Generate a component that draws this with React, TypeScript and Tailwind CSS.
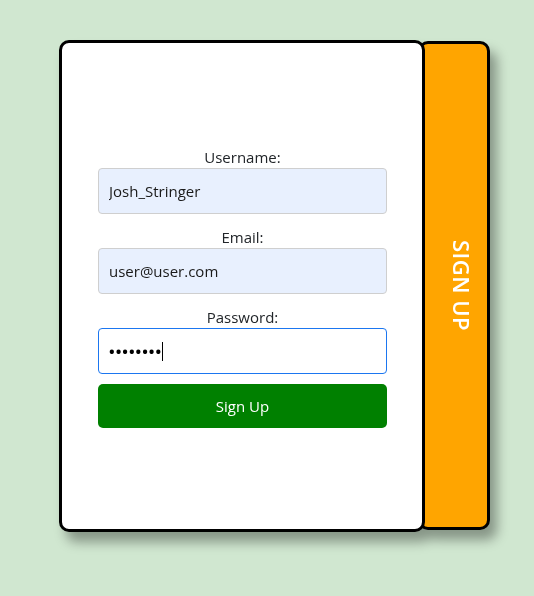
import React from "react";

const fields = [
  { id: "username", label: "Username:", type: "text", value: "Josh_Stringer" },
  { id: "email", label: "Email:", type: "email", value: "user@user.com" },
];

export default function App() {
  return (
    <div className="min-h-screen bg-[#d0e7d0] pt-[40px] pl-[59px] font-['Open_Sans',sans-serif] text-[#212529]">
      <div className="flex items-start w-fit drop-shadow-[7px_10px_6px_rgba(0,0,0,0.35)]">
        {/* Form card */}
        <div className="relative z-10 w-[366px] h-[492px] bg-white border-[3px] border-black rounded-[10px] flex flex-col justify-center pl-[36px] pr-[35px] pt-[2px]">
          <form className="flex flex-col" onSubmit={(e) => e.preventDefault()}>
            {fields.map((f) => (
              <div key={f.id} className="flex flex-col mb-[12px]">
                <label htmlFor={f.id} className="block text-center text-[15px] leading-[22px]">
                  {f.label}
                </label>
                <input
                  id={f.id}
                  type={f.type}
                  defaultValue={f.value}
                  className="h-[46px] w-full rounded-[4px] border border-[#cfcfcf] bg-[#e8f0fe] pl-[10px] text-[15px] text-[#1a1a1a] outline-none"
                />
              </div>
            ))}

            <div className="flex flex-col">
              <label htmlFor="password" className="block text-center text-[15px] leading-[22px]">
                Password:
              </label>
              <div className="h-[46px] w-full rounded-[4px] border border-[#1b76f0] bg-white pl-[10px] flex items-center">
                <span className="text-[15px] font-bold text-black tracking-[1px]">••••••••</span>
                <span className="w-px h-[19px] bg-black" />
              </div>
            </div>

            <button
              type="submit"
              className="mt-[10px] h-[44px] w-full rounded-[5px] bg-[#008000] text-white text-[15px]"
            >
              Sign Up
            </button>
          </form>
        </div>

        {/* Side tab */}
        <div className="-ml-[7px] mt-[1px] w-[72px] h-[489px] bg-[#ffa500] border-[3px] border-black rounded-[10px] flex items-center justify-center pl-[14px]">
          <span className="[writing-mode:vertical-rl] whitespace-nowrap text-white text-[22px] font-semibold tracking-[0.5px]">
            SIGN UP
          </span>
        </div>
      </div>
    </div>
  );
}
